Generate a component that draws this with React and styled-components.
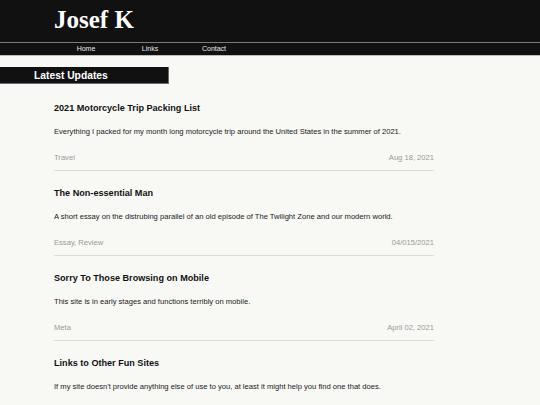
import React from "react";
import styled, { createGlobalStyle } from "styled-components";

const Global = createGlobalStyle`
  html, body { margin: 0; padding: 0; background: #f8f8f4; }
  body { font-family: "Liberation Sans", Arial, sans-serif; }
`;

const Header = styled.header`
  background: #111111;
  height: 42px;
  border-bottom: 1px solid #7a7a7a;
  box-sizing: content-box;
  padding-left: 54px;
  display: flex;
  align-items: flex-start;
`;

const Title = styled.h1`
  margin: 0;
  padding-top: 6px;
  font-family: "Liberation Serif", "Times New Roman", serif;
  font-weight: bold;
  font-size: 25px;
  line-height: 28px;
  color: #ffffff;
`;

const Nav = styled.nav`
  background: #111111;
  height: 12px;
  border-bottom: 1px solid #bdbdbd;
  padding-left: 54px;
  display: flex;
`;

const NavLink = styled.a`
  width: 64px;
  text-align: center;
  color: #e8e8e8;
  font-size: 7px;
  line-height: 12px;
  text-decoration: none;
`;

const Main = styled.main`
  padding-top: 11px;
`;

const SectionBar = styled.div`
  width: 134px;
  height: 16px;
  padding-left: 34px;
  background: #111111;
  border-right: 1px solid #6a6a6a;
  border-bottom: 1px solid #6a6a6a;
  color: #ffffff;
  font-weight: bold;
  font-size: 10.3px;
  line-height: 17px;
`;

const PostList = styled.div`
  margin: 17.5px 0 0 54px;
  width: 380px;
  display: flex;
  flex-direction: column;
  gap: 16px;
`;

const Post = styled.article`
  border-bottom: 1px solid #dcdcd6;
  padding-bottom: 7px;
`;

const PostTitle = styled.h2`
  margin: 0;
  font-size: 9.1px;
  line-height: 12px;
  font-weight: bold;
  color: #111111;
`;

const PostText = styled.p`
  margin: 13px 0 0;
  font-size: 7.6px;
  line-height: 10px;
  color: #1a1a1a;
`;

const Meta = styled.div`
  margin-top: 16px;
  display: flex;
  justify-content: space-between;
  font-size: 7.6px;
  line-height: 10px;
  color: #9a9a9a;
`;

const posts = [
  {
    title: "2021 Motorcycle Trip Packing List",
    text: "Everything I packed for my month long motorcycle trip around the United States in the summer of 2021.",
    tags: "Travel",
    date: "Aug 18, 2021",
  },
  {
    title: "The Non-essential Man",
    text: "A short essay on the distrubing parallel of an old episode of The Twilight Zone and our modern world.",
    tags: "Essay, Review",
    date: "04/015/2021",
  },
  {
    title: "Sorry To Those Browsing on Mobile",
    text: "This site is in early stages and functions terribly on mobile.",
    tags: "Meta",
    date: "April 02, 2021",
  },
  {
    title: "Links to Other Fun Sites",
    text: "If my site doesn't provide anything else of use to you, at least it might help you find one that does.",
    tags: "Links",
    date: "March 28, 2021",
  },
];

export default function App() {
  return (
    <>
      <Global />
      <Header>
        <Title>Josef K</Title>
      </Header>
      <Nav>
        <NavLink href="#">Home</NavLink>
        <NavLink href="#">Links</NavLink>
        <NavLink href="#">Contact</NavLink>
      </Nav>
      <Main>
        <SectionBar>Latest Updates</SectionBar>
        <PostList>
          {posts.map((p) => (
            <Post key={p.title}>
              <PostTitle>{p.title}</PostTitle>
              <PostText>{p.text}</PostText>
              <Meta>
                <span>{p.tags}</span>
                <span>{p.date}</span>
              </Meta>
            </Post>
          ))}
        </PostList>
      </Main>
    </>
  );
}
